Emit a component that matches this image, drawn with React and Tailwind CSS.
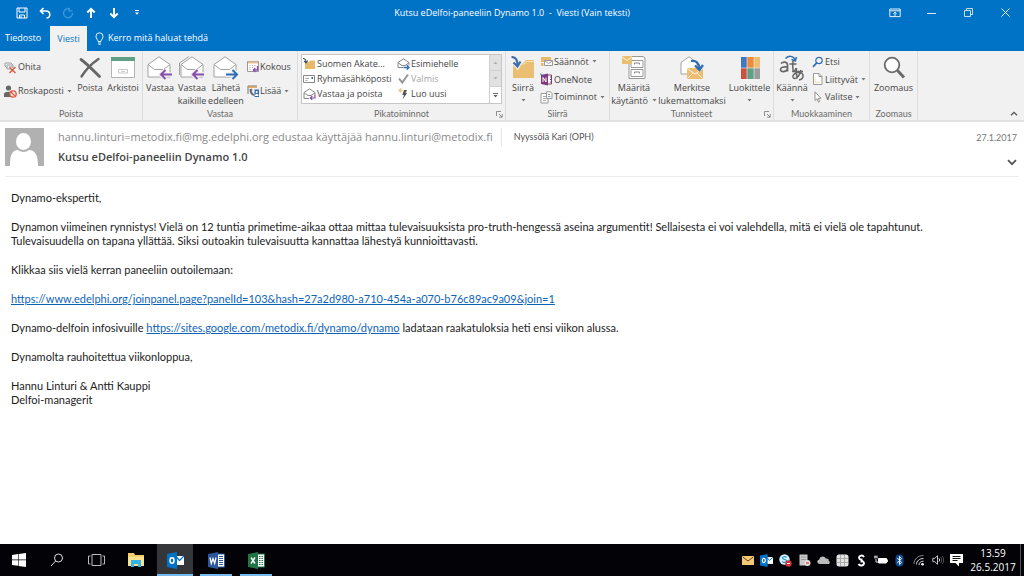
import React, { useState } from 'react';

/* ---------- title bar icons ---------- */

const SaveIcon = () => (
    <svg width="12" height="12" viewBox="0 0 12 12" fill="none" stroke="#fff">
        <path d="M1 1h10v10H1z" />
        <path d="M3 1v4h6V1M3.500 11V8h5v3" />
        <path d="M5 9v2" />
    </svg>
);

const UndoIcon = () => (
    <svg width="12" height="12" viewBox="0 0 12 12" fill="none" stroke="#fff" strokeWidth="1.6">
        <path d="M4.500 1L1.500 4l3 3M1.500 4H7c5 0 5 7 .5 7" />
    </svg>
);

const RedoIcon = () => (
    <svg width="12" height="12" viewBox="0 0 12 12" fill="none" stroke="#3f97dd" strokeWidth="1.300">
        <path d="M8 2.200A4.500 4.500 0 1 0 10.500 6M7 .8v3h3.500" />
    </svg>
);

const UpIcon = () => (
    <svg width="10" height="12" viewBox="0 0 10 12" fill="none" stroke="#fff" strokeWidth="2">
        <path d="M5 11V2M1.300 5.500L5 1.800l3.700 3.700" />
    </svg>
);

const DownIcon = () => (
    <svg width="10" height="12" viewBox="0 0 10 12" fill="none" stroke="#fff" strokeWidth="2">
        <path d="M5 1v9M1.300 6.500L5 10.200l3.700-3.700" />
    </svg>
);

const CustomizeIcon = () => (
    <svg width="6" height="6" viewBox="0 0 6 6" fill="#fff">
        <path d="M1 0h4v1H1zM1 2.500h4L3 4.800z" />
    </svg>
);

const RibbonOptionsIcon = () => (
    <svg width="12" height="10" viewBox="0 0 12 10" fill="none" stroke="#fff" strokeWidth=".9">
        <path d="M.8 1h10.400v7.600H.8zM.8 2.800h10.400M6 8V4.300M4.300 5.800L6 4.200l1.700 1.600" />
    </svg>
);

const MinimizeIcon = () => (
    <svg width="9" height="10" viewBox="0 0 9 10" stroke="#d5e8f7">
        <path d="M0 5.500h9" />
    </svg>
);

const RestoreIcon = () => (
    <svg width="9" height="9" viewBox="0 0 9 9" fill="none" stroke="#d5e8f7" strokeWidth=".9">
        <path d="M.5 2.500h6v6h-6zM2.500 2.500v-2h6v6h-2" />
    </svg>
);

const CloseIcon = () => (
    <svg width="9" height="9" viewBox="0 0 9 9" stroke="#e5f1fa">
        <path d="M.5.5l8 8M8.500.5l-8 8" />
    </svg>
);

const BulbIcon = () => (
    <svg width="9" height="13" viewBox="0 0 9 13" fill="none" stroke="#fff" strokeWidth=".9">
        <path d="M3 9.500C3 7.500 1 7 1 4.300a3.500 3.500 0 0 1 7 0C8 7 6 7.500 6 9.500zM3 11h3M3.500 12.400h2" />
    </svg>
);

/* ---------- small ribbon icons ---------- */

const IgnoreIcon = () => (
    <svg width="13" height="13" viewBox="0 0 13 13" fill="none">
        <path d="M1 2h6l2 2M1 2v3l2 2M3 4h6v3M3 4v4h3M5 6h4" stroke="#a0a0a0" />
        <path d="M5.500 6.500l6 5.500M11.500 6l-6 6" stroke="#d9583b" strokeWidth="1.300" />
    </svg>
);

const JunkIcon = () => (
    <svg width="13" height="13" viewBox="0 0 13 13">
        <circle cx="4.500" cy="3" r="2.600" fill="#666" />
        <path d="M0 12V9c0-3 9-3 9 0v3z" fill="#666" />
        <circle cx="9" cy="9" r="3.200" fill="#f1f1f1" stroke="#e0573c" strokeWidth="1.300" />
        <path d="M7 7l4 4" stroke="#e0573c" strokeWidth="1.300" />
    </svg>
);

const MeetingIcon = () => (
    <svg width="12" height="12" viewBox="0 0 12 12" fill="none">
        <path d="M.5.5h11v10H.5z" fill="#fff" stroke="#999" />
        <path d="M1 1.500h10" stroke="#e8c090" strokeWidth="2" />
        <path d="M2.500 4.500h1M5 4.500h1M7.500 4.500h1M2.500 6.500h1M5 6.500h1M2.500 8.500h1" stroke="#aaa" />
        <path d="M10.500 5v4H6.500M8.300 7L6.300 9l2 2" stroke="#8a4fae" strokeWidth="1.300" />
    </svg>
);

const MoreIcon = () => (
    <svg width="12" height="12" viewBox="0 0 12 12" fill="none">
        <path d="M1 9V1h9" stroke="#777" />
        <path d="M1 2h9" stroke="#d9974e" strokeWidth="1.500" />
        <path d="M2.500 4.500c0 3 1 5 4 6.500l1-1.500-1.500-1L4.500 6l1-1-1-1.500z" fill="#666" />
        <path d="M7.500 4.500H12V12H7.500z" fill="#2f6db5" />
        <circle cx="9.700" cy="7" r="1.100" fill="#fff" />
        <path d="M8 11c0-3 3.500-3 3.500 0z" fill="#fff" />
    </svg>
);

const FolderMoveIcon = () => (
    <svg width="13" height="12" viewBox="0 0 13 12" fill="none">
        <path d="M2 4h4l1-1.500h5V11H2z" fill="#e8b968" />
        <path d="M0 .5c2.500 0 3 1.500 3 4M1 3l2 2 1.800-2.500" stroke="#444f60" strokeWidth="1.100" />
    </svg>
);

const TeamMailIcon = () => (
    <svg width="13" height="12" viewBox="0 0 13 12" fill="none">
        <path d="M.5 2.500h11v7H.5z" fill="#fff" stroke="#888" />
        <path d="M8.500 5h1.500" stroke="#2f6db5" strokeWidth="2" />
        <path d="M2.500 5.500h3.500M2.500 7.500h2" stroke="#aaa" />
    </svg>
);

const SmallReplyIcon = () => (
    <svg width="13" height="12" viewBox="0 0 13 12" fill="none">
        <path d="M1 10.500V4.500L6.500.8 12 4.500v3M1 10.500h5M1 4.800l4 2.700h3l4-2.700" stroke="#888" />
        <path d="M12 7v3H7.500M9.300 8L7.300 10l2 2" stroke="#8a4fae" strokeWidth="1.200" />
    </svg>
);

const ToManagerIcon = () => (
    <svg width="13" height="12" viewBox="0 0 13 12" fill="none">
        <path d="M1 9.500V4.500L6.500.8 12 4.500v3M1 9.500h5M1 4.800l4 2.700h3l4-2.700" stroke="#888" />
        <path d="M6.500 9.500h5.500M9.800 7.300L12 9.500l-2.200 2.200" stroke="#2f6db5" strokeWidth="1.300" />
    </svg>
);

const DoneIcon = () => (
    <svg width="13" height="12" viewBox="0 0 13 12" fill="none" stroke="#979797" strokeWidth="2">
        <path d="M2 5.500l3.200 4L11 1.500" />
    </svg>
);

const CreateNewIcon = () => (
    <svg width="13" height="12" viewBox="0 0 13 12" fill="none">
        <path d="M3.500 0v5M1 2.500h5M1.700.7l3.600 3.600M5.300.7L1.700 4.300" stroke="#ecc58c" strokeWidth=".8" />
        <path d="M7 2h3L8.500 5h1.700L5.500 11.500 7 7H5.300z" fill="#555" />
    </svg>
);

const RulesIcon = () => (
    <svg width="13" height="13" viewBox="0 0 13 13" fill="none">
        <path d="M1 2h10v5H1z" fill="#e8b968" />
        <path d="M4.500 5.500h8v5h-8z" fill="#fff" stroke="#999" />
        <path d="M5 6l3.500 2.500L12 6" stroke="#999" />
        <path d="M1 8h2.500v3H1z" fill="#e8b968" />
    </svg>
);

const OneNoteIcon = () => (
    <svg width="13" height="13" viewBox="0 0 13 13" fill="none">
        <path d="M6 2h5.500v9H6" fill="#fff" stroke="#80397b" />
        <path d="M10 4h2M10 6.500h2M10 9h2" stroke="#80397b" />
        <path d="M1 2l7-1.500v12L1 11z" fill="#80397b" />
        <path d="M3 9V4.500L6 9V4.500" stroke="#fff" />
        <path d="M0 1c2 0 2.500 1 2.500 3" stroke="#3d6fae" />
    </svg>
);

const ActionsIcon = () => (
    <svg width="13" height="13" viewBox="0 0 13 13" fill="none">
        <path d="M1 2.500h7v9.500H1z" fill="#fff" stroke="#999" />
        <path d="M3 5.500h3M3 7.500h3M3 9.500h3" stroke="#aaa" />
        <path d="M6.500.8h4l1.500 1.700v5H6.500z" fill="#fff" stroke="#999" />
        <path d="M8 3.500h2M8 5.500h2.500" stroke="#7aa0cc" />
    </svg>
);

const FindIcon = () => (
    <svg width="12" height="12" viewBox="0 0 12 12" fill="none" stroke="#2f6db5">
        <circle cx="7" cy="4.500" r="3.200" strokeWidth="1.200" />
        <path d="M4.700 6.800L1 10.800" strokeWidth="1.700" />
    </svg>
);

const RelatedIcon = () => (
    <svg width="12" height="12" viewBox="0 0 12 12" fill="none">
        <path d="M1.500.5H7l3 3v8H1.500z" fill="#fff" stroke="#999" />
        <path d="M7 .5v3h3" stroke="#999" />
        <path d="M3 4.500v5M3 9.500h5" stroke="#f0dcb8" />
    </svg>
);

const SelectIcon = () => (
    <svg width="12" height="12" viewBox="0 0 12 12" fill="#fff" stroke="#888" strokeWidth=".9">
        <path d="M3 .8v8.700l2-1.800 1.400 3.500 1.300-.6-1.400-3.300H9z" />
    </svg>
);

/* ---------- large ribbon icons ---------- */

const DeleteIcon = () => (
    <svg width="24" height="24" viewBox="0 0 24 24" fill="none" stroke="#666" strokeLinecap="round">
        <path d="M3 3.500C8 7 15 14 21.500 20.500" strokeWidth="2.800" />
        <path d="M20.500 3C13 8 7 15 3.500 20.500" strokeWidth="2.400" />
    </svg>
);

const ArchiveIcon = () => (
    <svg width="24" height="24" viewBox="0 0 24 24" fill="none">
        <path d="M.5 1.500h23v20H.5z" fill="#fff" stroke="#b4b4b4" />
        <path d="M0 1h24v4H0z" fill="#5f9f86" />
        <path d="M7.500 13.500h9v3.500h-9z" stroke="#c8c8c8" />
        <path d="M10 15.300h4" stroke="#c8c8c8" />
    </svg>
);

const Envelope = () => (
    <>
        <path d="M1 21V8.500L12 .8l11 7.700V21z" fill="#fff" stroke="#999" strokeWidth=".9" />
        <path d="M1 8.500l6.500 5h9l6.500-5" fill="none" stroke="#999" strokeWidth=".9" />
    </>
);

const ReplyIcon = () => (
    <svg width="26" height="24" viewBox="0 0 26 24" fill="none">
        <Envelope />
        <path d="M25 18.500H14M18.500 14l-4.500 4.500 4.500 4.500" stroke="#f1f1f1" strokeWidth="4.500" />
        <path d="M25 18.500H14M18.500 14l-4.500 4.500 4.500 4.500" stroke="#8a4fae" strokeWidth="2" />
    </svg>
);

const ReplyAllIcon = () => (
    <svg width="26" height="24" viewBox="0 0 26 24" fill="none">
        <path d="M.5 19V7L10 .5" stroke="#999" strokeWidth=".9" />
        <g transform="translate(1 0)">
            <Envelope />
        </g>
        <path d="M25 18.500H14M18.500 14l-4.500 4.500 4.500 4.500" stroke="#f1f1f1" strokeWidth="4.500" />
        <path d="M25 18.500H14M18.500 14l-4.500 4.500 4.500 4.500" stroke="#8a4fae" strokeWidth="2" />
    </svg>
);

const ForwardIcon = () => (
    <svg width="26" height="24" viewBox="0 0 26 24" fill="none">
        <Envelope />
        <path d="M13 18.500h11M19.500 14l4.500 4.500-4.500 4.500" stroke="#f1f1f1" strokeWidth="4.500" />
        <path d="M13 18.500h11M19.500 14l4.500 4.500-4.500 4.500" stroke="#2f6db5" strokeWidth="2" />
    </svg>
);

const MoveIcon = () => (
    <svg width="24" height="24" viewBox="0 0 24 24" fill="none">
        <path d="M2 7h10l3-3h8v18H2z" fill="#ebbf72" />
        <path d="M2 8h11l3-2.500h7" stroke="#f8e5c2" />
        <path d="M.5 1C5 1 6.500 4 6.500 9M2.500 6.500l4 4 3-5" stroke="#f1f1f1" strokeWidth="4.500" />
        <path d="M.5 1C5 1 6.500 4 6.500 9M2.500 6.500l4 4 3-5" stroke="#3d6fae" strokeWidth="2.200" />
    </svg>
);

const PolicyIcon = () => (
    <svg width="26" height="24" viewBox="0 0 26 24" fill="none">
        <path d="M8 2l2-1.500h12L24 2v20.500H8z" fill="#fff" stroke="#999" />
        <path d="M10 4.500h12v7H10zM10 13.500h12v7H10z" stroke="#999" />
        <path d="M13.500 8.500v-1.500h5v1.500M13.500 17.500V16h5v1.500" stroke="#888" />
        <path d="M1 0h10v8H1z" fill="#ebbf72" />
        <path d="M1 1l5 3.500L11 1" stroke="#fbf0dc" />
    </svg>
);

const UnreadIcon = () => (
    <svg width="24" height="24" viewBox="0 0 24 24" fill="none">
        <path d="M1 18V6.500L9 .8l8 5.700V18z" fill="#fff" stroke="#999" strokeWidth=".9" />
        <path d="M7 12h16v11H7z" fill="#f0bd70" />
        <path d="M7 12.500l8 5.500 8-5.500M7.500 22.500L13 17M22.500 22.500L17 17" stroke="#fdf3e2" />
        <path d="M11 5c5-1 8 2 8.500 8M15 9.500l4.500 4.500 3.500-5" stroke="#2f6db5" strokeWidth="2.200" />
    </svg>
);

const CategoryIcon = () => (
    <svg width="24" height="24" viewBox="0 0 24 24">
        <path d="M3 1h6v11H3z" fill="#3c78c3" />
        <path d="M9 1h7v11H9z" fill="#ee8a3c" />
        <path d="M16 1h6v11h-6z" fill="#f0bd70" />
        <path d="M3 12h6v11H3z" fill="#cc4f40" />
        <path d="M9 12h7v11H9z" fill="#5f9f86" />
        <path d="M16 12h6v11h-6z" fill="#9c9c9c" />
        <path d="M9 1v22M16 1v22M3 12h19" stroke="#f1f1f1" strokeWidth=".6" />
    </svg>
);

const TranslateIcon = () => (
    <svg width="26" height="26" viewBox="0 0 26 26" fill="none" stroke="#666">
        <path d="M2 8.500c2-2 6.500-2 6.500 1.500v6.500M8.500 12c-4-.5-7 .5-7 2.500 0 3 5 3 7-.5" strokeWidth="1.700" />
        <path d="M10.500 9h7M14 5.500c-.3 4-.3 7 0 9.500 1.500 1 3 0 3-2" strokeWidth="1.500" />
        <path d="M13 16.500h11M17.500 13c-.6 4-.4 7 .8 10.500M22 15c-1 5-4 9-6.500 8.500-3.500-1-1-6 4-6 6 0 6 6 .5 7.500" strokeWidth="1.500" />
        <path d="M6.500 3.500C9.500.5 14 .5 16 4.500M12.500 4.500l3.800 1.500L17.500 2" stroke="#2f6db5" strokeWidth="1.500" />
    </svg>
);

const ZoomIcon = () => (
    <svg width="24" height="24" viewBox="0 0 24 24" fill="none" stroke="#6a6a6a">
        <circle cx="10" cy="9" r="7.300" fill="#fff" strokeWidth="1.800" />
        <path d="M15.500 14.500l6.500 7" strokeWidth="3" />
    </svg>
);

/* ---------- ribbon parts ---------- */

const Caret = () => (
    <svg className="shrink-0" width="5" height="3" viewBox="0 0 5 3" fill="#777">
        <path d="M.5 0h4L2.500 2.500z" />
    </svg>
);

const Launcher = () => (
    <button type="button" aria-label="Lisäasetukset" className="absolute right-0.5 bottom-0.5">
        <svg width="7" height="7" viewBox="0 0 7 7" fill="none" stroke="#777" strokeWidth=".8">
            <path d="M.5 5V.5H5M3 3l3 3M6.200 3v3.200H3" />
        </svg>
    </button>
);

const Group = ({ label, launcher, children }) => (
    <section aria-label={label} className="relative flex shrink-0 flex-col border-r border-[#dcdcdc] pt-0.5">
        <div className="flex h-[55px]">{children}</div>
        <div className="text-center font-['Lato',sans-serif] text-[9px] leading-3 text-[#6b6b6b]">{label}</div>
        {launcher && <Launcher />}
    </section>
);

const LargeButton = ({ icon, line1, line2, caret, className }) => (
    <button type="button" className={`flex flex-col items-center pt-px ${className}`}>
        <span className="flex h-[27px] items-center">{icon}</span>
        <span className="leading-[13px] whitespace-nowrap">{line1}</span>
        <span className="flex h-[13px] items-center gap-1 leading-[13px] whitespace-nowrap">
            {line2}
            {caret && <Caret />}
        </span>
    </button>
);

const SmallButton = ({ icon, label, caret }) => (
    <button type="button" className="flex w-full items-center gap-px whitespace-nowrap">
        {icon}
        {label}
        {caret && <span className="pl-0.5"><Caret /></span>}
    </button>
);

const QuickStep = ({ icon, label, disabled }) => (
    <button type="button" disabled={disabled} className="flex h-[15px] items-center gap-px whitespace-nowrap disabled:text-[#a6a6a6]">
        {icon}
        {label}
    </button>
);

const Ribbon = () => (
    <div className="relative flex h-[71px] border-b-2 border-[#e1e1e1] bg-[#f1f1f1] text-[9px] text-[#444]">
        <Group label="Poista">
            <div className="grid w-[74px] grid-rows-[24px_24px] pt-0.5 pl-1">
                <SmallButton icon={<IgnoreIcon />} label="Ohita" />
                <SmallButton icon={<JunkIcon />} label="Roskaposti" caret />
            </div>
            <LargeButton className="w-8" icon={<DeleteIcon />} line1="Poista" />
            <LargeButton className="mr-0.5 w-[34px]" icon={<ArchiveIcon />} line1="Arkistoi" />
        </Group>
        <Group label="Vastaa">
            <LargeButton className="w-[34px]" icon={<ReplyIcon />} line1="Vastaa" />
            <LargeButton className="w-[30px]" icon={<ReplyAllIcon />} line1="Vastaa" line2="kaikille" />
            <LargeButton className="w-[38px]" icon={<ForwardIcon />} line1="Lähetä" line2="edelleen" />
            <div className="grid w-[52px] grid-rows-[24px_24px] pt-0.5 pl-0.5">
                <SmallButton icon={<MeetingIcon />} label="Kokous" />
                <SmallButton icon={<MoreIcon />} label="Lisää" caret />
            </div>
        </Group>
        <Group label="Pikatoiminnot" launcher>
            <div className="mx-[3px] mt-px flex h-[50px] w-[201px] border border-[#c6c6c6] bg-white">
                <div className="grid flex-1 grid-cols-[94px_1fr] content-center pl-px">
                    <QuickStep icon={<FolderMoveIcon />} label="Suomen Akate..." />
                    <QuickStep icon={<ToManagerIcon />} label="Esimiehelle" />
                    <QuickStep icon={<TeamMailIcon />} label="Ryhmäsähköposti" />
                    <QuickStep icon={<DoneIcon />} label="Valmis" disabled />
                    <QuickStep icon={<SmallReplyIcon />} label="Vastaa ja poista" />
                    <QuickStep icon={<CreateNewIcon />} label="Luo uusi" />
                </div>
                <div className="grid w-3 grid-rows-3 divide-y divide-[#d0d0d0] border-l border-[#d0d0d0]">
                    <button type="button" aria-label="Edellinen rivi" className="flex items-center justify-center bg-[#e1e1e1]">
                        <svg width="5" height="3" viewBox="0 0 5 3" fill="#b0b0b0"><path d="M.5 3h4L2.500.5z" /></svg>
                    </button>
                    <button type="button" aria-label="Seuraava rivi" className="flex items-center justify-center bg-[#e1e1e1]">
                        <svg width="5" height="3" viewBox="0 0 5 3" fill="#b0b0b0"><path d="M.5 0h4L2.500 2.500z" /></svg>
                    </button>
                    <button type="button" aria-label="Lisää" className="flex items-center justify-center">
                        <svg width="5" height="5" viewBox="0 0 5 5" fill="#666"><path d="M0 0h5v1H0zM.3 2h4.400L2.500 4.500z" /></svg>
                    </button>
                </div>
            </div>
        </Group>
        <Group label="Siirrä">
            <LargeButton className="w-[34px]" icon={<MoveIcon />} line1="Siirrä" caret />
            <div className="grid h-[53px] w-[69px] grid-rows-3">
                <SmallButton icon={<RulesIcon />} label="Säännöt" caret />
                <SmallButton icon={<OneNoteIcon />} label="OneNote" />
                <SmallButton icon={<ActionsIcon />} label="Toiminnot" caret />
            </div>
        </Group>
        <Group label="Tunnisteet" launcher>
            <LargeButton className="w-12" icon={<PolicyIcon />} line1="Määritä" line2="käytäntö" caret />
            <LargeButton className="w-[68px]" icon={<UnreadIcon />} line1="Merkitse" line2="lukemattomaksi" />
            <LargeButton className="w-[47px]" icon={<CategoryIcon />} line1="Luokittele" caret />
        </Group>
        <Group label="Muokkaaminen">
            <LargeButton className="w-9" icon={<TranslateIcon />} line1="Käännä" caret />
            <div className="grid h-[53px] w-[59px] grid-rows-3 pl-0.5">
                <SmallButton icon={<FindIcon />} label="Etsi" />
                <SmallButton icon={<RelatedIcon />} label="Liittyvät" caret />
                <SmallButton icon={<SelectIcon />} label="Valitse" caret />
            </div>
        </Group>
        <Group label="Zoomaus">
            <LargeButton className="w-[47px]" icon={<ZoomIcon />} line1="Zoomaus" />
        </Group>
        <button type="button" aria-label="Kutista valintanauha" className="mt-auto mr-1.5 mb-1 ml-auto">
            <svg width="8" height="5" viewBox="0 0 8 5" fill="none" stroke="#555" strokeWidth="1.300">
                <path d="M1 4.300l3-3 3 3" />
            </svg>
        </button>
    </div>
);

const TitleBar = () => {
    const [query, setQuery] = useState('');

    return (
        <header className="bg-[#0173c7] text-[9px] text-white">
            <div className="grid h-[25px] grid-cols-[1fr_auto_1fr] items-center">
                <div className="flex items-center pl-2.5">
                    <button type="button" aria-label="Tallenna" className="flex w-[23px] justify-center"><SaveIcon /></button>
                    <button type="button" aria-label="Kumoa" className="flex w-[23px] justify-center"><UndoIcon /></button>
                    <button type="button" aria-label="Tee uudelleen" disabled className="flex w-[23px] justify-center"><RedoIcon /></button>
                    <button type="button" aria-label="Edellinen" className="flex w-[23px] justify-center"><UpIcon /></button>
                    <button type="button" aria-label="Seuraava" className="flex w-[23px] justify-center"><DownIcon /></button>
                    <button type="button" aria-label="Mukauta" className="flex w-[23px] justify-center"><CustomizeIcon /></button>
                </div>
                <h1 className="whitespace-pre">Kutsu eDelfoi-paneeliin Dynamo 1.0  -  Viesti (Vain teksti)</h1>
                <div className="flex items-center justify-end">
                    <button type="button" aria-label="Valintanauhan asetukset" className="flex w-[37px] justify-center"><RibbonOptionsIcon /></button>
                    <button type="button" aria-label="Pienennä" className="flex w-[37px] justify-center"><MinimizeIcon /></button>
                    <button type="button" aria-label="Palauta" className="flex w-[37px] justify-center"><RestoreIcon /></button>
                    <button type="button" aria-label="Sulje" className="flex w-[37px] justify-center"><CloseIcon /></button>
                </div>
            </div>
            <nav className="flex h-[26px] items-stretch">
                <button type="button" className="w-[50px] pr-1">Tiedosto</button>
                <button type="button" className="mt-px w-[37px] bg-[#f1f1f1] text-[#0173c7]">Viesti</button>
                <label className="flex flex-1 items-center gap-1 pl-2">
                    <BulbIcon />
                    <input
                        className="w-40 bg-transparent outline-none placeholder:text-white"
                        value={query}
                        onChange={(e) => setQuery(e.target.value)}
                        placeholder="Kerro mitä haluat tehdä"
                        aria-label="Kerro mitä haluat tehdä"
                        type="text"
                    />
                </label>
            </nav>
        </header>
    );
};

const MessageHeader = () => (
    <section className="mx-[5px] flex border-b border-[#ececec] pt-1.5 pb-2.5">
        <svg className="shrink-0" width="39" height="38" viewBox="0 0 39 38">
            <path d="M0 0h39v38H0z" fill="#b1b1b1" />
            <ellipse cx="18.500" cy="13.500" rx="7.500" ry="8.500" fill="#fff" />
            <path d="M5 38c0-11 2-16 8-16 3 2.500 8 2.500 11 0 6 0 9 5 9 16z" fill="#fff" />
        </svg>
        <div className="ml-3.5">
            <div className="flex">
                <p className="pr-2 text-[11px] leading-[18px] whitespace-nowrap text-[#8a8a8a]">
                    hannu.linturi=metodix.fi@mg.edelphi.org edustaa käyttäjää hannu.linturi@metodix.fi
                </p>
                <p className="border-l border-[#e6e6e6] pl-3 font-['Lato',sans-serif] text-[9px] leading-[18px] whitespace-nowrap text-[#555]">Nyyssölä Kari (OPH)</p>
            </div>
            <h2 className="mt-0.5 text-[11px] leading-[18px] font-semibold text-[#444]">Kutsu eDelfoi-paneeliin Dynamo 1.0</h2>
        </div>
        <div className="ml-auto flex flex-col items-end justify-between">
            <time className="pr-0.5 font-['Lato',sans-serif] text-[9px] leading-[20px] text-[#777]">27.1.2017</time>
            <button type="button" aria-label="Näytä tiedot" className="mr-0.5">
                <svg width="10" height="7" viewBox="0 0 10 7" fill="none" stroke="#555" strokeWidth="1.800">
                    <path d="M1 1.200l4 4 4-4" />
                </svg>
            </button>
        </div>
    </section>
);

const Message = () => (
    <main className="flex flex-1 flex-col gap-[15px] px-[11px] pt-3.5 font-['Lato',sans-serif] text-[11px] leading-[14px] text-[#1c1c1c]">
        <p>Dynamo-ekspertit,</p>
        <p>
            Dynamon viimeinen rynnistys! Vielä on 12 tuntia primetime-aikaa ottaa mittaa tulevaisuuksista pro-truth-hengessä aseina argumentit! Sellaisesta ei voi valehdella, mitä ei vielä ole tapahtunut.
            <br />
            Tulevaisuudella on tapana yllättää. Siksi outoakin tulevaisuutta kannattaa lähestyä kunnioittavasti.
        </p>
        <p>Klikkaa siis vielä kerran paneeliin outoilemaan:</p>
        <p>
            <a className="text-[#0d63b8] underline" href="https://www.edelphi.org/joinpanel.page?panelId=103&hash=27a2d980-a710-454a-a070-b76c89ac9a09&join=1">
                https://www.edelphi.org/joinpanel.page?panelId=103&amp;hash=27a2d980-a710-454a-a070-b76c89ac9a09&amp;join=1
            </a>
        </p>
        <p>
            Dynamo-delfoin infosivuille{' '}
            <a className="text-[#0d63b8] underline" href="https://sites.google.com/metodix.fi/dynamo/dynamo">
                https://sites.google.com/metodix.fi/dynamo/dynamo
            </a>{' '}
            ladataan raakatuloksia heti ensi viikon alussa.
        </p>
        <p>Dynamolta rauhoitettua viikonloppua,</p>
        <p>
            Hannu Linturi &amp; Antti Kauppi
            <br />
            Delfoi-managerit
        </p>
    </main>
);

/* ---------- taskbar ---------- */

const WindowsIcon = () => (
    <svg width="14" height="14" viewBox="0 0 14 14" fill="#fff">
        <path d="M0 2l6-.9v5.500H0zM6.600 1L14 0v6.600H6.600zM0 7.300h6v5.500L0 12zM6.600 7.300H14V14l-7.400-1z" />
    </svg>
);

const SearchIcon = () => (
    <svg width="14" height="14" viewBox="0 0 14 14" fill="none" stroke="#ddd">
        <circle cx="8.500" cy="5" r="4" />
        <path d="M5.700 8L1 13" />
    </svg>
);

const TaskViewIcon = () => (
    <svg width="17" height="12" viewBox="0 0 17 12" fill="none" stroke="#bbb">
        <path d="M4 .5h9v11H4zM2.500 2H.5v8h2M14.500 2h2v8h-2" />
    </svg>
);

const ExplorerIcon = () => (
    <svg width="18" height="16" viewBox="0 0 18 16">
        <path d="M1 1h6l1 2h9v11H1z" fill="#f5cf6b" />
        <path d="M1 5h16v9H1z" fill="#fbe08e" />
        <path d="M4 15V8h10v7h-3v-3H7v3z" fill="#35b4e8" />
    </svg>
);

const OutlookIcon = ({ size = 17 }) => (
    <svg width={size} height={size} viewBox="0 0 17 17" fill="none">
        <path d="M9 4h8v9H9z" fill="#fff" />
        <path d="M9.500 5l3 3.500L17 4" stroke="#0173c7" strokeWidth="1.200" />
        <path d="M0 2l10-2v17L0 15z" fill="#0173c7" />
        <ellipse cx="5" cy="8.500" rx="2" ry="2.700" stroke="#fff" strokeWidth="1.500" />
    </svg>
);

const WordIcon = () => (
    <svg width="17" height="17" viewBox="0 0 17 17" fill="none">
        <path d="M9 2h7.500v13H9z" fill="#fff" stroke="#2b579a" />
        <path d="M11 4.500h4M11 6.500h4M11 8.500h4M11 10.500h4M11 12.500h4" stroke="#2b579a" />
        <path d="M0 2l10-2v17L0 15z" fill="#2b579a" />
        <path d="M2 5.500l1.300 6L5 6.500l1.700 5 1.300-6" stroke="#fff" strokeWidth="1.200" />
    </svg>
);

const ExcelIcon = () => (
    <svg width="17" height="17" viewBox="0 0 17 17" fill="none">
        <path d="M9 2h7.500v13H9z" fill="#fff" stroke="#217346" />
        <path d="M11 4.500h1.500M13.500 4.500H15M11 6.500h1.500M13.500 6.500H15M11 8.500h1.500M13.500 8.500H15M11 10.500h1.500M13.500 10.500H15M11 12.500h1.500M13.500 12.500H15" stroke="#217346" />
        <path d="M0 2l10-2v17L0 15z" fill="#217346" />
        <path d="M3 5.500l4 6M7 5.500l-4 6" stroke="#fff" strokeWidth="1.400" />
    </svg>
);

const trayIcons = [
    {
        name: 'Uusi sähköposti',
        icon: (
            <svg width="12" height="9" viewBox="0 0 12 9" fill="none">
                <path d="M0 0h12v9H0z" fill="#f5c877" />
                <path d="M.5.8L6 5l5.500-4.200" stroke="#5b4422" />
            </svg>
        )
    },
    { name: 'Outlook', icon: <OutlookIcon size={13} /> },
    {
        name: 'Skype',
        icon: (
            <svg width="13" height="13" viewBox="0 0 13 13" fill="none">
                <circle cx="5.500" cy="5.500" r="5.200" fill="#d7effa" />
                <path d="M7.500 3.500c-1-1.200-4-1-4 .6 0 1.800 4.200 1 4.200 2.900 0 1.700-3.300 1.900-4.400.3" stroke="#1a9bd7" strokeWidth="1.200" />
                <circle cx="9.500" cy="9.500" r="3.200" fill="#d13438" />
                <path d="M8 9.500h3" stroke="#fff" />
            </svg>
        )
    },
    {
        name: 'Palvelin',
        icon: (
            <svg width="13" height="13" viewBox="0 0 13 13" fill="none">
                <path d="M1.500.5h8v11h-8z" fill="#c9c9c9" />
                <path d="M3 3h5M3 5.500h5" stroke="#999" />
                <circle cx="9.500" cy="9" r="3" fill="#e9dcdc" />
                <path d="M8 9h3" stroke="#c33" strokeWidth="1.200" />
            </svg>
        )
    },
    {
        name: 'OneDrive',
        icon: (
            <svg width="13" height="8" viewBox="0 0 13 8" fill="#bdbdbd">
                <path d="M3 8C-.5 8-.5 4 2.200 3.800 2.500 0 7.500-.8 8.800 2.500 11.500 2 12 4 11.500 4.800 13.500 5.500 13 8 11.200 8z" />
            </svg>
        )
    },
    {
        name: 'Verkko',
        icon: (
            <svg width="13" height="13" viewBox="0 0 13 13" fill="none">
                <rect x=".5" y=".5" width="12" height="12" rx="2.500" fill="#e4e4e4" />
                <path d="M4.500 1v11M8.500 1v11M1 4.500h11M1 8.500h11" stroke="#a9a9a9" />
            </svg>
        )
    },
    {
        name: 'Synkronointi',
        icon: (
            <svg width="9" height="13" viewBox="0 0 9 13" fill="none" stroke="#fff" strokeWidth="1.900">
                <path d="M7 3C5.500.5 2 1.500 2 3.800 2 6.500 7 6 7 9c0 2.700-4 3.500-5.500 1M4.500 4.500v4" />
            </svg>
        )
    },
    {
        name: 'Akku',
        icon: (
            <svg width="14" height="10" viewBox="0 0 14 10" fill="none">
                <path d="M4.500 3.500h8v4.500h-8z" fill="#fff" stroke="#fff" />
                <path d="M13.500 4.500v2.500M0 2h3M1 .5v3M3 .5v3M2 4v3h2" stroke="#ddd" />
            </svg>
        )
    },
    {
        name: 'Bluetooth',
        icon: (
            <svg width="9" height="13" viewBox="0 0 9 13" fill="none">
                <rect x=".5" y=".5" width="8" height="12" rx="4" fill="#0c4f92" />
                <path d="M2.300 4l4.200 4.500-2 2V2.500l2 2L2.300 9" stroke="#fff" strokeWidth=".9" />
            </svg>
        )
    },
    {
        name: 'Langaton verkko',
        icon: (
            <svg width="12" height="12" viewBox="0 0 12 12" fill="none">
                <path d="M1 10C1 5 5 1.500 10.500 1.500" stroke="#888" />
                <path d="M3.500 10.500c0-3.500 3-6 7-6M6 11c0-2.200 1.800-3.800 4.500-3.800" stroke="#ddd" />
                <circle cx="9.500" cy="10.300" r="1.300" fill="#fff" />
            </svg>
        )
    },
    {
        name: 'Äänenvoimakkuus',
        icon: (
            <svg width="12" height="12" viewBox="0 0 12 12" fill="none">
                <path d="M.8 4.300h2L5.500 1.700v8.600L2.800 7.700h-2z" stroke="#ddd" strokeWidth=".9" />
                <path d="M7 4.300c.8 1 .8 2.400 0 3.400" stroke="#ddd" />
                <path d="M8.700 3c1.300 1.800 1.300 4.200 0 6M10.300 2c1.700 2.500 1.700 5.500 0 8" stroke="#666" strokeWidth=".8" />
            </svg>
        )
    },
    {
        name: 'Toimintokeskus',
        icon: (
            <svg width="14" height="14" viewBox="0 0 14 14">
                <path d="M0 1h13v9H9v3.500L5.500 10H0z" fill="#fff" />
                <path d="M2.500 3.500h8M2.500 5.500h8M2.500 7.500h5" stroke="#111" />
            </svg>
        )
    }
];

const Taskbar = () => (
    <footer className="flex h-8 bg-[#020207] text-[10px] text-white">
        <button type="button" aria-label="Käynnistä" className="flex w-[38px] items-center justify-center"><WindowsIcon /></button>
        <button type="button" aria-label="Haku" className="flex w-[38px] items-center justify-center"><SearchIcon /></button>
        <button type="button" aria-label="Tehtävänäkymä" className="flex w-10 items-center justify-center"><TaskViewIcon /></button>
        <button type="button" aria-label="Resurssienhallinta" className="flex w-10 items-center justify-center"><ExplorerIcon /></button>
        <button type="button" aria-label="Outlook" className="mr-1 ml-px flex w-9 items-center justify-center border-b-2 border-[#76b9ed] bg-[#35363a] pt-0.5"><OutlookIcon /></button>
        <button type="button" aria-label="Word" className="mr-1 ml-[3px] flex w-8 items-center justify-center border-b-2 border-[#76b9ed] pt-0.5"><WordIcon /></button>
        <button type="button" aria-label="Excel" className="mx-1 flex w-8 items-center justify-center border-b-2 border-[#76b9ed] pt-0.5"><ExcelIcon /></button>
        <div className="ml-auto flex">
            {trayIcons.map(item => (
                <button key={item.name} type="button" aria-label={item.name} className="flex w-[19px] items-center justify-center">
                    {item.icon}
                </button>
            ))}
            <div className="w-[54px] pt-0.5 text-center leading-[14px]">
                <div>13.59</div>
                <div>26.5.2017</div>
            </div>
            <button type="button" aria-label="Näytä työpöytä" className="w-1 border-l border-[#555]" />
        </div>
    </footer>
);

const App = () => {
    return (
        <div className="flex min-h-screen flex-col bg-white font-['Open_Sans',sans-serif]">
            <TitleBar />
            <Ribbon />
            <MessageHeader />
            <Message />
            <Taskbar />
        </div>
    );
};

export default App;
